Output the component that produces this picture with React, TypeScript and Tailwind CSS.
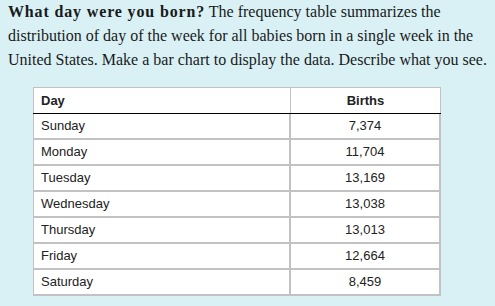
import React from 'react';

const births = [
  { day: 'Sunday', count: '7,374' },
  { day: 'Monday', count: '11,704' },
  { day: 'Tuesday', count: '13,169' },
  { day: 'Wednesday', count: '13,038' },
  { day: 'Thursday', count: '13,013' },
  { day: 'Friday', count: '12,664' },
  { day: 'Saturday', count: '8,459' },
];

const App: React.FC = () => {
  return (
    <div className="w-[495px] h-[306px] bg-[#d9f1f5] pl-2 overflow-hidden">
      <p className="font-['Liberation_Serif',serif] text-[16px] leading-[24px] text-[#1a1a1a]">
        <span className="font-bold tracking-[0.85px]">What day were you born?</span> The frequency table summarizes the distribution of day of the week for all babies born in a single week in the United States. Make a bar chart to display the data. Describe what you see.
      </p>

      <div className="ml-[25px] mt-[15px] w-[408px] bg-white font-['Liberation_Sans',Arial,sans-serif] text-[13px] text-[#222]">
        <div className="flex h-[26px] border-t border-l border-r border-[#c2c2c2] border-b-0">
          <div className="w-[257px] border-r border-[#c2c2c2] pl-[7px] flex items-center font-bold">Day</div>
          <div className="flex-1 flex items-center justify-center font-bold">Births</div>
        </div>
        <div className="h-px bg-black"></div>
        {births.map(row => (
          <div key={row.day} className="flex h-[26px] border-l border-[#c2c2c2] border-r-2 border-b-2">
            <div className="w-[257px] border-r-2 border-[#c2c2c2] pl-[7px] flex items-center">{row.day}</div>
            <div className="flex-1 flex items-center justify-center">{row.count}</div>
          </div>
        ))}
      </div>
    </div>
  );
};

export default App;
